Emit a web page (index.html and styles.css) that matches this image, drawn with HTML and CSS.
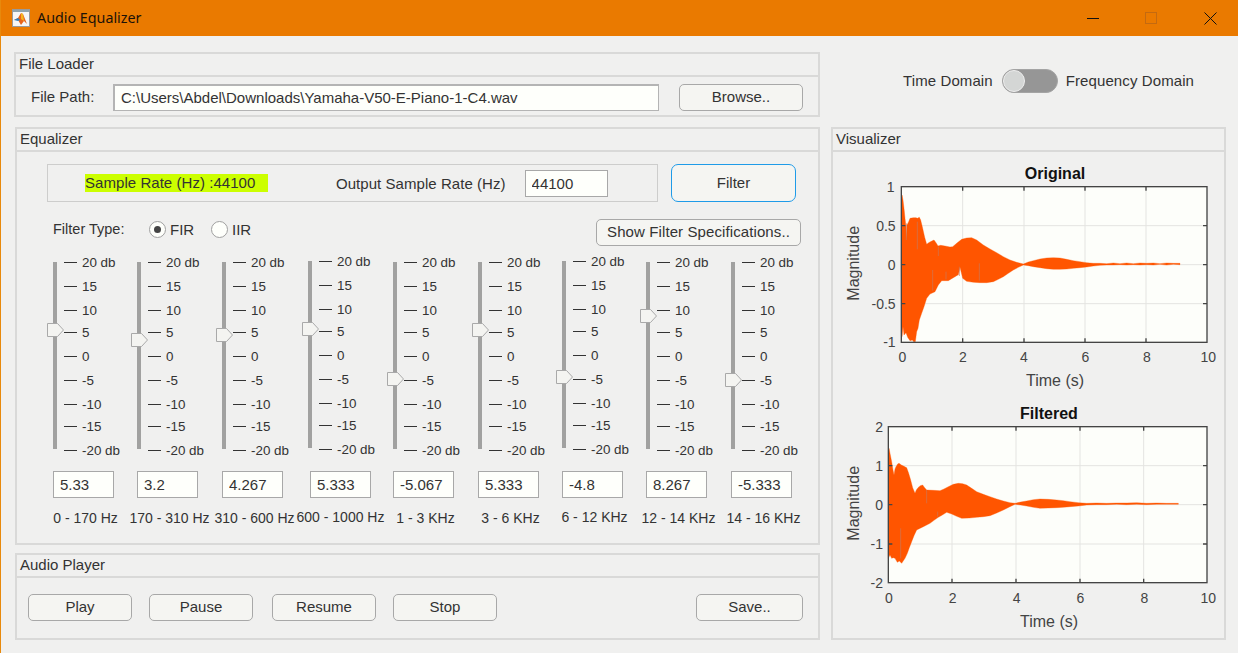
FILE: index.html
```html
<!DOCTYPE html>
<html lang="en">
<head>
    <meta charset="UTF-8">
    <meta name="viewport" content="width=device-width, initial-scale=1.0">
    <title>Audio Equalizer</title>
    <link rel="stylesheet" href="styles.css">
</head>
<body>

    <svg class="defs" width="0" height="0">
        <symbol id="thumbShape" viewBox="0 0 17 14">
            <polygon points="0.5,0.5 10.5,0.5 16.5,7 10.5,13.5 0.5,13.5" fill="#f4f4f1" stroke="#a9a9a9"/>
        </symbol>
    </svg>

    <div class="titlebar">
        <svg class="app-icon" width="18" height="18" viewBox="0 0 18 18">
            <rect x="0.5" y="0.5" width="17" height="17" fill="#f6f6f6" stroke="#9a9a9a"/>
            <rect x="1" y="1" width="16" height="2" fill="#8fa3ad"/>
            <polygon points="2,11 6,9 9,4 11,5 15,15 12,12 9,16 6,11" fill="#e8641b"/>
            <polygon points="2,11 6,9 8,11 6,12" fill="#2b7fc0"/>
            <polygon points="9,4 11,5 12,12 9,10" fill="#f4b41f"/>
        </svg>
        <span class="app-title">Audio Equalizer</span>
        <div class="window-buttons">
            <span class="win-min"></span>
            <span class="win-max"></span>
            <svg class="win-close" width="13" height="13" viewBox="0 0 13 13">
                <path d="M0.5 0.5 L12.5 12.5 M12.5 0.5 L0.5 12.5" stroke="#111" stroke-width="1" fill="none"/>
            </svg>
        </div>
    </div>

    <div class="app">
        <div class="left-column">

            <div class="panel file-panel">
                <div class="panel-title">File Loader</div>
                <div class="file-row">
                    <label class="file-label">File Path:</label>
                    <input class="file-input" type="text" value="C:\Users\Abdel\Downloads\Yamaha-V50-E-Piano-1-C4.wav">
                    <button class="btn browse-btn">Browse..</button>
                </div>
            </div>

            <div class="panel eq-panel">
                <div class="panel-title">Equalizer</div>
                <div class="rate-row">
                    <div class="rate-box">
                        <span class="sample-rate">Sample Rate (Hz) :44100</span>
                        <label class="output-label">Output Sample Rate (Hz)</label>
                        <input class="rate-input" type="text" value="44100">
                    </div>
                    <button class="btn filter-btn">Filter</button>
                </div>
                <div class="type-row">
                    <span class="type-label">Filter Type:</span>
                    <span class="radio radio-on"></span>
                    <span class="radio-label">FIR</span>
                    <span class="radio"></span>
                    <span class="radio-label">IIR</span>
                    <button class="btn spec-btn">Show Filter Specifications..</button>
                </div>

                <div class="bands">

                    <div class="band">
                        <div class="slider">
                            <div class="track"></div>
                            <svg class="thumb" style="top:61px" width="17" height="14"><use href="#thumbShape"/></svg>
                            <div class="scale">
                                <div class="tick">20 db</div><div class="tick">15</div><div class="tick">10</div><div class="tick">5</div><div class="tick">0</div><div class="tick">-5</div><div class="tick">-10</div><div class="tick">-15</div><div class="tick">-20 db</div>
                            </div>
                        </div>
                        <input class="gain" type="text" value="5.33">
                        <div class="band-label">0 - 170 Hz</div>
                    </div>

                    <div class="band">
                        <div class="slider">
                            <div class="track"></div>
                            <svg class="thumb" style="top:71px" width="17" height="14"><use href="#thumbShape"/></svg>
                            <div class="scale">
                                <div class="tick">20 db</div><div class="tick">15</div><div class="tick">10</div><div class="tick">5</div><div class="tick">0</div><div class="tick">-5</div><div class="tick">-10</div><div class="tick">-15</div><div class="tick">-20 db</div>
                            </div>
                        </div>
                        <input class="gain" type="text" value="3.2">
                        <div class="band-label">170 - 310 Hz</div>
                    </div>

                    <div class="band">
                        <div class="slider">
                            <div class="track"></div>
                            <svg class="thumb" style="top:66px" width="17" height="14"><use href="#thumbShape"/></svg>
                            <div class="scale">
                                <div class="tick">20 db</div><div class="tick">15</div><div class="tick">10</div><div class="tick">5</div><div class="tick">0</div><div class="tick">-5</div><div class="tick">-10</div><div class="tick">-15</div><div class="tick">-20 db</div>
                            </div>
                        </div>
                        <input class="gain" type="text" value="4.267">
                        <div class="band-label">310 - 600 Hz</div>
                    </div>

                    <div class="band band-raised band-wide">
                        <div class="slider">
                            <div class="track"></div>
                            <svg class="thumb" style="top:61px" width="17" height="14"><use href="#thumbShape"/></svg>
                            <div class="scale">
                                <div class="tick">20 db</div><div class="tick">15</div><div class="tick">10</div><div class="tick">5</div><div class="tick">0</div><div class="tick">-5</div><div class="tick">-10</div><div class="tick">-15</div><div class="tick">-20 db</div>
                            </div>
                        </div>
                        <input class="gain" type="text" value="5.333">
                        <div class="band-label">600 - 1000 Hz</div>
                    </div>

                    <div class="band">
                        <div class="slider">
                            <div class="track"></div>
                            <svg class="thumb" style="top:110px" width="17" height="14"><use href="#thumbShape"/></svg>
                            <div class="scale">
                                <div class="tick">20 db</div><div class="tick">15</div><div class="tick">10</div><div class="tick">5</div><div class="tick">0</div><div class="tick">-5</div><div class="tick">-10</div><div class="tick">-15</div><div class="tick">-20 db</div>
                            </div>
                        </div>
                        <input class="gain" type="text" value="-5.067">
                        <div class="band-label">1 - 3 KHz</div>
                    </div>

                    <div class="band">
                        <div class="slider">
                            <div class="track"></div>
                            <svg class="thumb" style="top:61px" width="17" height="14"><use href="#thumbShape"/></svg>
                            <div class="scale">
                                <div class="tick">20 db</div><div class="tick">15</div><div class="tick">10</div><div class="tick">5</div><div class="tick">0</div><div class="tick">-5</div><div class="tick">-10</div><div class="tick">-15</div><div class="tick">-20 db</div>
                            </div>
                        </div>
                        <input class="gain" type="text" value="5.333">
                        <div class="band-label">3 - 6 KHz</div>
                    </div>

                    <div class="band band-raised">
                        <div class="slider">
                            <div class="track"></div>
                            <svg class="thumb" style="top:109px" width="17" height="14"><use href="#thumbShape"/></svg>
                            <div class="scale">
                                <div class="tick">20 db</div><div class="tick">15</div><div class="tick">10</div><div class="tick">5</div><div class="tick">0</div><div class="tick">-5</div><div class="tick">-10</div><div class="tick">-15</div><div class="tick">-20 db</div>
                            </div>
                        </div>
                        <input class="gain" type="text" value="-4.8">
                        <div class="band-label">6 - 12 KHz</div>
                    </div>

                    <div class="band">
                        <div class="slider">
                            <div class="track"></div>
                            <svg class="thumb" style="top:47px" width="17" height="14"><use href="#thumbShape"/></svg>
                            <div class="scale">
                                <div class="tick">20 db</div><div class="tick">15</div><div class="tick">10</div><div class="tick">5</div><div class="tick">0</div><div class="tick">-5</div><div class="tick">-10</div><div class="tick">-15</div><div class="tick">-20 db</div>
                            </div>
                        </div>
                        <input class="gain" type="text" value="8.267">
                        <div class="band-label">12 - 14 KHz</div>
                    </div>

                    <div class="band">
                        <div class="slider">
                            <div class="track"></div>
                            <svg class="thumb" style="top:111px" width="17" height="14"><use href="#thumbShape"/></svg>
                            <div class="scale">
                                <div class="tick">20 db</div><div class="tick">15</div><div class="tick">10</div><div class="tick">5</div><div class="tick">0</div><div class="tick">-5</div><div class="tick">-10</div><div class="tick">-15</div><div class="tick">-20 db</div>
                            </div>
                        </div>
                        <input class="gain" type="text" value="-5.333">
                        <div class="band-label">14 - 16 KHz</div>
                    </div>

                </div>
            </div>

            <div class="panel player-panel">
                <div class="panel-title">Audio Player</div>
                <div class="player-row">
                    <button class="btn player-btn">Play</button>
                    <button class="btn player-btn">Pause</button>
                    <button class="btn player-btn">Resume</button>
                    <button class="btn player-btn">Stop</button>
                    <button class="btn save-btn">Save..</button>
                </div>
            </div>

        </div>

        <div class="right-column">
            <div class="domain-row">
                <span>Time Domain</span>
                <span class="switch"><span class="switch-knob"></span></span>
                <span>Frequency Domain</span>
            </div>

            <div class="panel vis-panel">
                <div class="panel-title">Visualizer</div>
                <div class="plots">

                    <svg class="plot" width="400" height="240" viewBox="0 0 1200 720">
                        <rect x="214" y="110" width="917" height="467" fill="#fdfefa"/>
                        <path class="grid" d="M398 110V577M582 110V577M765 110V577M948 110V577M214 227H1131M214 344H1131M214 461H1131"/>
                        <path class="wave" d="M214 344L216 135L219 150L222 175L225 205L228 230L229 265L231 225L236 215L240 205L250 203L258 203L262 205L268 202L272 210L278 235L284 262L290 283L296 278L304 274L312 270L318 278L324 288L332 286L345 288L360 291L368 290L380 280L395 268L410 264L425 263L440 270L460 285L480 297L500 308L520 320L540 330L560 337L580 342L595 336L610 332L630 327L650 324L670 323L690 324L710 328L730 332L750 335L770 338L790 340L810 340L830 341L850 339L870 341L890 339L910 341L930 339L950 340L970 339L990 341L1010 339L1030 340L1050 340L1050 344L1030 343L1010 345L990 343L970 345L950 344L930 345L910 344L890 345L870 344L850 345L830 345L810 346L790 348L770 351L750 353L730 355L710 357L690 358L670 358L650 356L630 353L610 350L595 347L580 345L565 352L550 360L535 370L520 380L505 388L490 395L470 398L450 398L430 397L410 394L398 385L390 352L385 374L375 380L365 386L355 392L345 392L335 392L325 405L315 425L300 432L290 445L282 470L275 490L268 510L264 535L260 545L256 575L251 575L247 570L240 572L233 562L228 548L222 555L219 530L216 560Z"/>
                        <path class="notch" d="M262 215V298M325 290V318M388 350V378M448 340V392M308 360V422M229 220V270M348 365V388"/>
                        <path class="frame" d="M398 577V565M582 577V565M765 577V565M948 577V565M398 110V122M582 110V122M765 110V122M948 110V122M214 227H226M214 344H226M214 461H226M1131 227H1119M1131 344H1119M1131 461H1119"/>
                        <rect class="frame" x="214" y="110" width="917" height="467"/>
                        <text class="plot-title" x="675" y="88">Original</text>
                        <text class="tick-y" x="194" y="125">1</text>
                        <text class="tick-y" x="197" y="242">0.5</text>
                        <text class="tick-y" x="197" y="360">0</text>
                        <text class="tick-y" x="197" y="477">-0.5</text>
                        <text class="tick-y" x="197" y="592">-1</text>
                        <text class="tick-x" x="217" y="637">0</text>
                        <text class="tick-x" x="399" y="637">2</text>
                        <text class="tick-x" x="582" y="637">4</text>
                        <text class="tick-x" x="766" y="637">6</text>
                        <text class="tick-x" x="951" y="637">8</text>
                        <text class="tick-x" x="1135" y="637">10</text>
                        <text class="axis-label" x="675" y="708">Time (s)</text>
                        <text class="axis-label" transform="translate(88 340) rotate(-90)">Magnitude</text>
                    </svg>

                    <svg class="plot" width="400" height="240" viewBox="0 0 1200 720">
                        <rect x="175" y="95" width="956" height="468" fill="#fdfefa"/>
                        <path class="grid" d="M366 95V563M558 95V563M750 95V563M941 95V563M175 212H1131M175 329H1131M175 447H1131"/>
                        <path class="wave" d="M175 325L177 160L181 180L185 200L189 225L192 240L195 222L198 215L203 207L207 205L214 210L222 214L230 218L236 235L242 255L248 278L255 295L259 285L264 278L271 272L278 270L284 278L290 285L310 286L330 287L342 282L355 275L370 268L385 265L398 266L410 270L425 280L440 290L460 298L480 305L500 312L520 318L540 323L555 325L572 321L590 318L610 314L630 312L655 313L680 315L700 317L720 320L745 323L770 325L800 324L830 325L860 324L890 324L920 323L950 325L980 324L1010 325L1045 325L1045 328L1010 328L980 328L950 329L920 328L890 329L860 328L830 329L800 329L770 330L745 333L720 335L700 337L680 338L655 339L630 340L610 337L590 333L572 330L555 328L538 336L520 345L500 354L480 362L460 365L440 367L418 369L395 370L380 364L365 357L350 352L337 360L325 367L312 376L300 385L280 395L260 405L252 422L245 440L238 458L232 475L225 490L215 505L208 498L202 502L195 490L190 488L185 490L180 480L175 490Z"/>
                        <path class="notch" d="M290 285V325M212 400V490M323 350V365"/>
                        <path class="frame" d="M366 563V551M558 563V551M750 563V551M941 563V551M366 95V107M558 95V107M750 95V107M941 95V107M175 212H187M175 329H187M175 447H187M1131 212H1119M1131 329H1119M1131 447H1119"/>
                        <rect class="frame" x="175" y="95" width="956" height="468"/>
                        <text class="plot-title" x="657" y="72">Filtered</text>
                        <text class="tick-y" x="159" y="110">2</text>
                        <text class="tick-y" x="159" y="227">1</text>
                        <text class="tick-y" x="159" y="344">0</text>
                        <text class="tick-y" x="159" y="462">-1</text>
                        <text class="tick-y" x="159" y="578">-2</text>
                        <text class="tick-x" x="177" y="623">0</text>
                        <text class="tick-x" x="368" y="623">2</text>
                        <text class="tick-x" x="560" y="623">4</text>
                        <text class="tick-x" x="751" y="623">6</text>
                        <text class="tick-x" x="943" y="623">8</text>
                        <text class="tick-x" x="1135" y="623">10</text>
                        <text class="axis-label" x="657" y="695">Time (s)</text>
                        <text class="axis-label" transform="translate(88 325) rotate(-90)">Magnitude</text>
                    </svg>

                </div>
            </div>
        </div>
    </div>

</body>
</html>
```

FILE: styles.css
```css
* {
    box-sizing: border-box;
}
body {
    margin: 0;
    height: 653px;
    overflow: hidden;
    background-color: #f0f0ef;
    border-left: 1px solid #e8890c;
    font-family: "Liberation Sans", Arial, sans-serif;
    font-size: 15px;
    color: #333;
}
.defs {
    position: absolute;
}
input {
    font-family: inherit;
    font-size: 15px;
    color: #333;
    background-color: #fefffb;
    border: 1px solid #a8a8a8;
    outline: none;
}

/* title bar */
.titlebar {
    display: flex;
    align-items: center;
    height: 36px;
    padding-left: 11px;
    background-color: #ea7a00;
}
.app-icon {
    margin-right: 7px;
}
.app-title {
    margin-bottom: 1px;
    font-family: "Noto Sans", sans-serif;
    font-size: 14.3px;
    color: #1c1208;
}
.window-buttons {
    display: flex;
    align-items: center;
    margin-left: auto;
    padding-right: 21px;
}
.win-min {
    width: 12px;
    height: 1px;
    margin-right: 46px;
    background-color: #111;
}
.win-max {
    width: 12px;
    height: 12px;
    margin-right: 47px;
    border: 1px solid #c46a10;
}

/* page columns */
.app {
    display: flex;
    padding: 16px 0 0 13px;
}
.left-column {
    display: flex;
    flex-direction: column;
    width: 806px;
}
.right-column {
    width: 395px;
    margin-left: 11px;
}

/* panels */
.panel {
    border: 2px solid #d9d9d8;
}
.panel-title {
    height: 23px;
    padding-left: 3px;
    line-height: 19px;
    border-bottom: 2px solid #d9d9d8;
}
.file-panel {
    height: 65px;
}
.eq-panel {
    height: 418px;
    margin: 10px 0 0 1px;
}
.player-panel {
    height: 87px;
    margin: 8px 0 0 1px;
}

/* buttons */
.btn {
    height: 27px;
    padding: 0 0 2px;
    font-family: inherit;
    font-size: 15px;
    color: #333;
    background-color: #f5f5f2;
    border: 1px solid #a8a8a8;
    border-radius: 5px;
}

/* file loader */
.file-row {
    display: flex;
    align-items: center;
    padding: 7px 0 0 15px;
}
.file-label {
    width: 82px;
    margin-bottom: 2px;
}
.file-input {
    width: 546px;
    height: 27px;
    padding: 0 0 2px 6px;
    border-width: 2px 1px 1px 2px;
    border-color: #b4b4b4;
}
.browse-btn {
    width: 124px;
    margin-left: 20px;
}

/* equalizer top rows */
.rate-row {
    display: flex;
    padding: 12px 0 0 30px;
}
.rate-box {
    display: flex;
    align-items: center;
    width: 611px;
    height: 38px;
    padding-left: 37px;
    border: 1px solid #cdcdcc;
}
.sample-rate {
    width: 183px;
    height: 18px;
    line-height: 18px;
    background-color: #ccff00;
    letter-spacing: 0.05px;
}
.output-label {
    margin-left: 68px;
    letter-spacing: 0.05px;
}
.rate-input {
    width: 83px;
    height: 27px;
    margin-left: 19px;
    padding-left: 6px;
    line-height: 27px;
}
.filter-btn {
    width: 125px;
    height: 38px;
    margin-left: 13px;
    border: 1px solid #1f9be8;
    border-radius: 7px;
}
.type-row {
    display: flex;
    align-items: flex-start;
    height: 27px;
    margin-top: 17px;
    padding-left: 36px;
}
.type-label {
    width: 96px;
    margin-top: 2px;
    font-size: 14.5px;
}
.radio {
    display: flex;
    align-items: center;
    justify-content: center;
    width: 17px;
    height: 17px;
    margin-top: 2px;
    background-color: #fefffb;
    border: 1px solid #a0a0a0;
    border-radius: 50%;
}
.radio-on::after {
    content: "";
    width: 7px;
    height: 7px;
    border-radius: 50%;
    background-color: #444;
}
.radio-label {
    width: 45px;
    margin-top: 2px;
    padding-left: 4px;
}
.radio-label + .radio + .radio-label {
    width: 30px;
}
.spec-btn {
    width: 205px;
    margin-left: 338px;
    letter-spacing: 0.1px;
}

/* sliders */
.bands {
    display: grid;
    grid-template-columns: 84px 85px 86px 85px 85px 84px 84px 85px 85px;
    margin: 8px 0 0 36px;
}
.band {
    position: relative;
}
.band-raised .slider {
    margin-top: -1px;
    margin-bottom: 1px;
}
.slider {
    position: relative;
    height: 217px;
}
.track {
    position: absolute;
    top: 8px;
    left: 0;
    width: 4px;
    height: 187px;
    background-color: #a1a1a0;
}
.thumb {
    position: absolute;
    left: -6px;
    margin-top: 8px;
}
.scale {
    display: grid;
    grid-template-rows: 24px 24px 22px 24px 24px 24px 22px 24px 24px;
    padding-left: 11px;
}
.tick {
    display: flex;
    align-items: center;
    height: 16px;
    font-size: 13.4px;
    white-space: nowrap;
}
.tick::before {
    content: "";
    flex: none;
    width: 13px;
    height: 1px;
    margin-right: 5px;
    background-color: #333;
}
.gain {
    display: block;
    width: 61px;
    height: 27px;
    padding-left: 6px;
}
.band-wide .gain {
    margin-left: 2px;
}
.band-label {
    display: flex;
    justify-content: center;
    width: 61px;
    margin: 12px 0 0 2px;
    font-size: 14px;
    white-space: nowrap;
}
.band-raised .band-label {
    margin-top: 11px;
}

/* audio player */
.player-row {
    display: flex;
    align-items: center;
    padding: 16px 0 0 11px;
}
.player-btn {
    width: 104px;
    margin-right: 17px;
}
.player-btn:nth-child(2) {
    margin-right: 19px;
}
.save-btn {
    width: 107px;
    margin-left: 182px;
}

/* right side */
.domain-row {
    display: flex;
    align-items: center;
    height: 65px;
    padding: 0 0 8px 72px;
    letter-spacing: 0.1px;
}
.switch {
    width: 56px;
    height: 24px;
    margin: 0 8px 0 9px;
    padding: 1px;
    background-color: #969696;
    border: 1px solid #a4a4a4;
    border-radius: 12px;
}
.switch-knob {
    display: block;
    width: 22px;
    height: 22px;
    margin: -1px 0 0 -1px;
    background-color: #d4d6d5;
    border: 1px solid #eee;
    border-radius: 50%;
}
.vis-panel {
    height: 513px;
    margin-top: 10px;
}
.plots {
    display: flex;
    flex-direction: column;
    gap: 5px;
    margin: -2px 0 0 -3px;
}
.plot {
    display: block;
    flex: none;
}
.plot text {
    font-family: "Liberation Sans", Arial, sans-serif;
}
.grid {
    fill: none;
    stroke: #e4e4e1;
    stroke-width: 3;
}
.wave {
    fill: #ff5500;
    stroke: #ff5500;
    stroke-width: 1;
    stroke-linejoin: round;
}
.notch {
    fill: none;
    stroke: #c9785a;
    stroke-width: 2;
}
.frame {
    fill: none;
    stroke: #444;
    stroke-width: 4;
}
.plot-title {
    font-size: 48px;
    font-weight: bold;
    fill: #111;
    text-anchor: middle;
}
.tick-y {
    font-size: 42px;
    fill: #444;
    text-anchor: end;
}
.tick-x {
    font-size: 42px;
    fill: #444;
    text-anchor: middle;
}
.axis-label {
    font-size: 48px;
    fill: #444;
    text-anchor: middle;
}
```
